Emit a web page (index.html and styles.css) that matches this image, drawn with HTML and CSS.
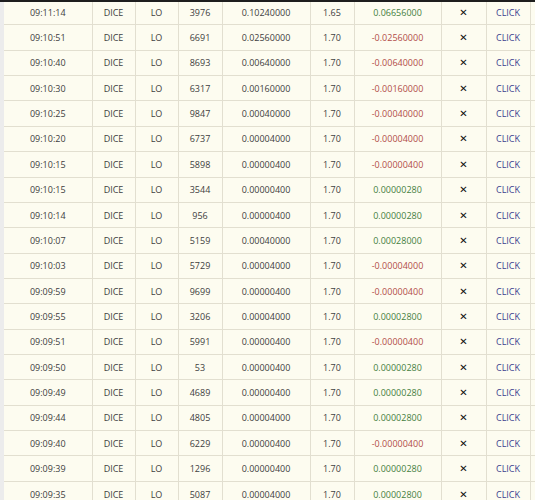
FILE: index.html
```html
<!DOCTYPE html>
<html>
<head>
<meta charset="utf-8">
<link rel="stylesheet" href="styles.css">
</head>
<body>
<div class="page">
  <div class="topbar"></div>
  <table class="bets">
    <colgroup>
      <col class="c-time"><col class="c-game"><col class="c-side"><col class="c-roll"><col class="c-bet"><col class="c-mult"><col class="c-profit"><col class="c-x"><col class="c-link"><col class="c-rest">
    </colgroup>
    <tbody>
      <tr><td>09:11:14</td><td>DICE</td><td>LO</td><td>3976</td><td>0.10240000</td><td>1.65</td><td class="win">0.06656000</td><td class="x">✕</td><td class="link">CLICK</td><td></td></tr>
      <tr><td>09:10:51</td><td>DICE</td><td>LO</td><td>6691</td><td>0.02560000</td><td>1.70</td><td class="loss">-0.02560000</td><td class="x">✕</td><td class="link">CLICK</td><td></td></tr>
      <tr><td>09:10:40</td><td>DICE</td><td>LO</td><td>8693</td><td>0.00640000</td><td>1.70</td><td class="loss">-0.00640000</td><td class="x">✕</td><td class="link">CLICK</td><td></td></tr>
      <tr><td>09:10:30</td><td>DICE</td><td>LO</td><td>6317</td><td>0.00160000</td><td>1.70</td><td class="loss">-0.00160000</td><td class="x">✕</td><td class="link">CLICK</td><td></td></tr>
      <tr><td>09:10:25</td><td>DICE</td><td>LO</td><td>9847</td><td>0.00040000</td><td>1.70</td><td class="loss">-0.00040000</td><td class="x">✕</td><td class="link">CLICK</td><td></td></tr>
      <tr><td>09:10:20</td><td>DICE</td><td>LO</td><td>6737</td><td>0.00004000</td><td>1.70</td><td class="loss">-0.00004000</td><td class="x">✕</td><td class="link">CLICK</td><td></td></tr>
      <tr><td>09:10:15</td><td>DICE</td><td>LO</td><td>5898</td><td>0.00000400</td><td>1.70</td><td class="loss">-0.00000400</td><td class="x">✕</td><td class="link">CLICK</td><td></td></tr>
      <tr><td>09:10:15</td><td>DICE</td><td>LO</td><td>3544</td><td>0.00000400</td><td>1.70</td><td class="win">0.00000280</td><td class="x">✕</td><td class="link">CLICK</td><td></td></tr>
      <tr><td>09:10:14</td><td>DICE</td><td>LO</td><td>956</td><td>0.00000400</td><td>1.70</td><td class="win">0.00000280</td><td class="x">✕</td><td class="link">CLICK</td><td></td></tr>
      <tr><td>09:10:07</td><td>DICE</td><td>LO</td><td>5159</td><td>0.00040000</td><td>1.70</td><td class="win">0.00028000</td><td class="x">✕</td><td class="link">CLICK</td><td></td></tr>
      <tr><td>09:10:03</td><td>DICE</td><td>LO</td><td>5729</td><td>0.00004000</td><td>1.70</td><td class="loss">-0.00004000</td><td class="x">✕</td><td class="link">CLICK</td><td></td></tr>
      <tr><td>09:09:59</td><td>DICE</td><td>LO</td><td>9699</td><td>0.00000400</td><td>1.70</td><td class="loss">-0.00000400</td><td class="x">✕</td><td class="link">CLICK</td><td></td></tr>
      <tr><td>09:09:55</td><td>DICE</td><td>LO</td><td>3206</td><td>0.00004000</td><td>1.70</td><td class="win">0.00002800</td><td class="x">✕</td><td class="link">CLICK</td><td></td></tr>
      <tr><td>09:09:51</td><td>DICE</td><td>LO</td><td>5991</td><td>0.00000400</td><td>1.70</td><td class="loss">-0.00000400</td><td class="x">✕</td><td class="link">CLICK</td><td></td></tr>
      <tr><td>09:09:50</td><td>DICE</td><td>LO</td><td>53</td><td>0.00000400</td><td>1.70</td><td class="win">0.00000280</td><td class="x">✕</td><td class="link">CLICK</td><td></td></tr>
      <tr><td>09:09:49</td><td>DICE</td><td>LO</td><td>4689</td><td>0.00000400</td><td>1.70</td><td class="win">0.00000280</td><td class="x">✕</td><td class="link">CLICK</td><td></td></tr>
      <tr><td>09:09:44</td><td>DICE</td><td>LO</td><td>4805</td><td>0.00004000</td><td>1.70</td><td class="win">0.00002800</td><td class="x">✕</td><td class="link">CLICK</td><td></td></tr>
      <tr><td>09:09:40</td><td>DICE</td><td>LO</td><td>6229</td><td>0.00000400</td><td>1.70</td><td class="loss">-0.00000400</td><td class="x">✕</td><td class="link">CLICK</td><td></td></tr>
      <tr><td>09:09:39</td><td>DICE</td><td>LO</td><td>1296</td><td>0.00000400</td><td>1.70</td><td class="win">0.00000280</td><td class="x">✕</td><td class="link">CLICK</td><td></td></tr>
      <tr><td>09:09:35</td><td>DICE</td><td>LO</td><td>5087</td><td>0.00004000</td><td>1.70</td><td class="win">0.00002800</td><td class="x">✕</td><td class="link">CLICK</td><td></td></tr>
    </tbody>
  </table>
</div>
</body>
</html>
```
FILE: styles.css
```css
html, body {
  margin: 0;
  padding: 0;
  background: #ececec;
  overflow: hidden;
}
.page {
  position: relative;
  padding-left: 4px;
  width: 540px;
}
.topbar {
  position: absolute;
  left: 0;
  top: 0;
  width: 100%;
  height: 2px;
  background: #1e1e1e;
}
.bets {
  border-collapse: collapse;
  table-layout: fixed;
  width: 536px;
  background: #fdfcf0;
  font-family: "Open Sans", sans-serif;
  font-size: 9px;
  color: #404040;
}
.bets td {
  height: 24.37px;
  padding: 0;
  text-align: center;
  vertical-align: middle;
  border: 1px solid #e2dfd0;
  white-space: nowrap;
}
.bets tr:first-child td { border-top: 0; }
.bets td:first-child { border-left: 0; }
.c-time { width: 88px; }
.c-game { width: 43px; }
.c-side { width: 43px; }
.c-roll { width: 44px; }
.c-bet { width: 88px; }
.c-mult { width: 44px; }
.c-profit { width: 87px; }
.c-x { width: 45px; }
.c-link { width: 44px; }
.c-rest { width: 10px; }
.win { color: #457f3f; }
.loss { color: #b24d48; }
.x {
  font-family: "DejaVu Sans", sans-serif;
  font-size: 10px;
  font-weight: bold;
  color: #111;
}
.link { color: #3b3f8f; }
```
